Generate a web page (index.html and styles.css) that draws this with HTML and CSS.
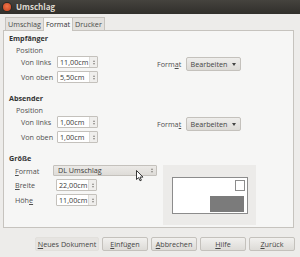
FILE: index.html
```html
<!DOCTYPE html>
<html>
    <head>
        <meta charset="utf-8" />
        <title>Umschlag</title>
        <link rel="stylesheet" href="styles.css">
    </head>
    <body>
        <div class="titlebar">
            <span class="close"></span>
            <span class="title">Umschlag</span>
        </div>
        <div class="dialog">
            <div class="tabs">
                <div class="tab">Umschlag</div>
                <div class="tab active">Format</div>
                <div class="tab">Drucker</div>
            </div>
            <div class="panel">
                <div class="group">
                    <div class="heading">Empfänger</div>
                    <div class="group-body">
                        <div class="fields">
                            <div class="sub">Position</div>
                            <div class="row"><span class="label">Von links</span><div class="spin"><span class="value">11,00cm</span><span class="arrows"><i class="up"></i><i class="down"></i></span></div></div>
                            <div class="row"><span class="label">Von oben</span><div class="spin"><span class="value">5,50cm</span><span class="arrows"><i class="up"></i><i class="down"></i></span></div></div>
                        </div>
                        <div class="side">
                            <span class="side-label">Form<u>a</u>t</span>
                            <div class="menu-btn">Bearbeiten <span class="caret"></span></div>
                        </div>
                    </div>
                </div>
                <div class="group">
                    <div class="heading">Absender</div>
                    <div class="group-body">
                        <div class="fields">
                            <div class="sub">Position</div>
                            <div class="row"><span class="label">Von links</span><div class="spin"><span class="value">1,00cm</span><span class="arrows"><i class="up"></i><i class="down"></i></span></div></div>
                            <div class="row"><span class="label">Von oben</span><div class="spin"><span class="value">1,00cm</span><span class="arrows"><i class="up"></i><i class="down"></i></span></div></div>
                        </div>
                        <div class="side">
                            <span class="side-label">Forma<u>t</u></span>
                            <div class="menu-btn">Bearbeiten <span class="caret"></span></div>
                        </div>
                    </div>
                </div>
                <div class="group">
                    <div class="heading">Größe</div>
                    <div class="group-body">
                        <div class="fields size-fields">
                            <div class="row combo-row"><span class="label"><u>F</u>ormat</span><div class="combo"><span class="value">DL Umschlag</span><span class="arrows"><i class="up"></i><i class="down"></i></span></div></div>
                            <div class="row"><span class="label"><u>B</u>reite</span><div class="spin"><span class="value">22,00cm</span><span class="arrows"><i class="up"></i><i class="down"></i></span></div></div>
                            <div class="row"><span class="label">Höh<u>e</u></span><div class="spin"><span class="value">11,00cm</span><span class="arrows"><i class="up"></i><i class="down"></i></span></div></div>
                        </div>
                        <div class="preview">
                            <div class="envelope">
                                <div class="stamp"></div>
                                <div class="address"></div>
                            </div>
                        </div>
                    </div>
                </div>
            </div>
            <div class="buttons">
                <div class="button flat"><u>N</u>eues Dokument</div>
                <div class="button"><u>E</u>infügen</div>
                <div class="button"><u>A</u>bbrechen</div>
                <div class="button"><u>H</u>ilfe</div>
                <div class="button"><u>Z</u>urück</div>
            </div>
        </div>
        <svg class="cursor" width="8" height="12" viewBox="0 0 8 12">
            <path d="M0.5 0.5 L0.5 9.5 L2.6 7.6 L4 10.8 L5.4 10.2 L4 7.1 L7 7.1 Z" fill="#fff" stroke="#222" stroke-width="0.9" />
        </svg>
    </body>
</html>
```

FILE: styles.css
```css
body {
    margin: 0;
    width: 300px;
    height: 257px;
    overflow: hidden;
    position: relative;
    background-color: #edecea;
    font-family: "Open Sans", "DejaVu Sans", sans-serif;
    font-size: 7.2px;
    color: #3c3c3c;
}

u {
    text-decoration-thickness: 1px;
    text-underline-offset: 1px;
}

.titlebar {
    height: 14px;
    display: flex;
    align-items: center;
    background: linear-gradient(to bottom, #45433e, #302f2b);
}

.close {
    width: 8px;
    height: 8px;
    margin: 0 5px 1px 3px;
    border-radius: 50%;
    background: radial-gradient(circle at 50% 40%, #f0754a, #c8401c);
    box-shadow: 0 0 0 1px #2a2926;
}

.title {
    color: #dcd8cf;
    font-weight: bold;
    font-size: 8px;
    margin-bottom: 1px;
}

.dialog {
    padding: 3px 6px 0 3px;
}

.tabs {
    display: flex;
    align-items: flex-end;
    height: 13px;
    padding-left: 2px;
}

.tab {
    height: 12px;
    line-height: 12px;
    padding: 0 2px;
    background-color: #e3e1de;
    border: 1px solid #c6c3be;
    border-bottom: none;
    margin-right: -1px;
    color: #4a4a4a;
}

.tab.active {
    height: 13px;
    line-height: 13px;
    background-color: #f6f6f5;
    position: relative;
    z-index: 1;
    margin-bottom: -1px;
    color: #333;
}

.panel {
    height: 195px;
    background-color: #f6f6f5;
    border: 1px solid #c6c3be;
    padding: 1px 0 0 5px;
}

.group {
    margin-bottom: 6px;
}

.heading {
    font-weight: bold;
    height: 12px;
    line-height: 12px;
    color: #333;
}

.group-body {
    display: flex;
}

.fields {
    width: 148px;
}

.sub {
    padding-left: 7px;
    height: 12px;
    line-height: 12px;
    color: #505050;
}

.row {
    display: flex;
    align-items: center;
    height: 12px;
    margin-bottom: 3px;
}

.label {
    width: 36px;
    padding-left: 12px;
    color: #505050;
}

.spin, .combo {
    display: flex;
    height: 12px;
    box-sizing: border-box;
    border: 1px solid #c4c1bc;
    border-radius: 1px;
}

.spin {
    width: 41px;
    background-color: #fff;
}

.spin .value, .combo .value {
    flex: 1;
    line-height: 10px;
    padding-left: 2px;
    color: #3a3a3a;
}

.arrows {
    width: 7px;
    display: flex;
    flex-direction: column;
    align-items: center;
    justify-content: center;
    gap: 1px;
    background-color: #efeeec;
    border-left: 1px solid #dddbd7;
}

.arrows i {
    width: 0;
    height: 0;
    border-left: 1.5px solid transparent;
    border-right: 1.5px solid transparent;
}

.arrows .up {
    border-bottom: 2px solid #8a8883;
}

.arrows .down {
    border-top: 2px solid #8a8883;
}

.side {
    display: flex;
    align-items: center;
    height: 14px;
    margin-top: 13px;
}

.side-label {
    width: 29px;
    color: #505050;
}

.menu-btn {
    width: 55px;
    height: 14px;
    box-sizing: border-box;
    display: flex;
    align-items: center;
    justify-content: center;
    gap: 5px;
    border: 1px solid #c4c1bc;
    border-radius: 2px;
    background: linear-gradient(to bottom, #eeedeb, #dcdad6);
    color: #454545;
}

.caret {
    width: 0;
    height: 0;
    border-left: 2px solid transparent;
    border-right: 2px solid transparent;
    border-top: 3px solid #444;
}

.size-fields {
    width: 154px;
}

.size-fields .label {
    width: 41px;
    padding-left: 6px;
}

.combo-row {
    margin-top: 1px;
    height: 11px;
}

.combo-row .label {
    width: 38px;
}

.combo {
    width: 104px;
    height: 11px;
    background: linear-gradient(to bottom, #ebe9e6, #dedcd8);
}

.combo .value {
    padding-left: 4px;
    line-height: 9px;
}

.combo .arrows {
    background: none;
    border-left: none;
    width: 9px;
}

.preview {
    margin-top: 1px;
    width: 93px;
    height: 60px;
    box-sizing: border-box;
    padding: 12px 0 0 9px;
    background-color: #ecebe9;
}

.envelope {
    width: 76px;
    height: 37px;
    box-sizing: border-box;
    border: 1px solid #8c8c8c;
    background-color: #fff;
    display: flex;
    flex-direction: column;
    justify-content: space-between;
    align-items: flex-end;
    padding: 2px 3px 1px 0;
}

.stamp {
    width: 10px;
    height: 11px;
    box-sizing: border-box;
    border: 1px solid #8c8c8c;
    margin-right: -1px;
}

.address {
    width: 34px;
    height: 16px;
    background-color: #7b7b7b;
}

.buttons {
    display: flex;
    justify-content: flex-end;
    gap: 3px;
    margin-top: 9px;
    margin-right: -1px;
}

.button {
    width: 46px;
    height: 14px;
    box-sizing: border-box;
    display: flex;
    align-items: center;
    justify-content: center;
    border: 1px solid #c4c1bc;
    border-radius: 2px;
    background: linear-gradient(to bottom, #f1f0ee, #dddbd7);
    color: #454545;
}

.button.flat {
    width: 64px;
    border-color: #e2e0dc;
    background: #e6e4e1;
}

.cursor {
    position: absolute;
    left: 136px;
    top: 170px;
}
```
